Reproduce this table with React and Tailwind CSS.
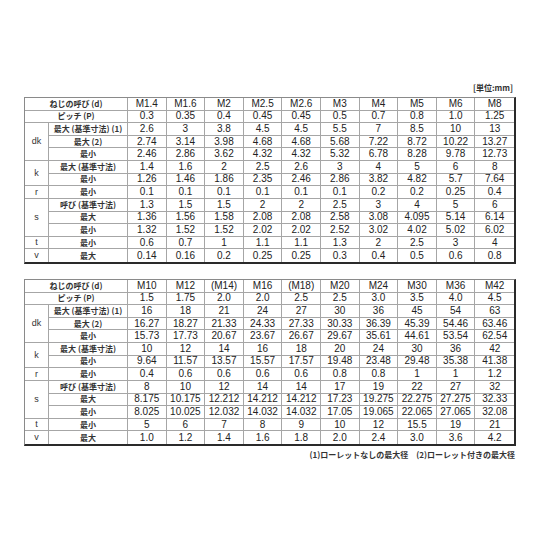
const JP = "font-['Noto_Sans_CJK_JP',sans-serif]";
const NUM = "font-['Liberation_Sans',Arial,sans-serif]";

const table1 = {
  sizes: ["M1.4", "M1.6", "M2", "M2.5", "M2.6", "M3", "M4", "M5", "M6", "M8"],
  pitch: ["0.3", "0.35", "0.4", "0.45", "0.45", "0.5", "0.7", "0.8", "1.0", "1.25"],
  groups: [
    {
      sym: "dk",
      rows: [
        ["最大 (基準寸法) (1)", ["2.6", "3", "3.8", "4.5", "4.5", "5.5", "7", "8.5", "10", "13"]],
        ["最大 (2)", ["2.74", "3.14", "3.98", "4.68", "4.68", "5.68", "7.22", "8.72", "10.22", "13.27"]],
        ["最小", ["2.46", "2.86", "3.62", "4.32", "4.32", "5.32", "6.78", "8.28", "9.78", "12.73"]],
      ],
    },
    {
      sym: "k",
      rows: [
        ["最大 (基準寸法)", ["1.4", "1.6", "2", "2.5", "2.6", "3", "4", "5", "6", "8"]],
        ["最小", ["1.26", "1.46", "1.86", "2.35", "2.46", "2.86", "3.82", "4.82", "5.7", "7.64"]],
      ],
    },
    { sym: "r", rows: [["最小", ["0.1", "0.1", "0.1", "0.1", "0.1", "0.1", "0.2", "0.2", "0.25", "0.4"]]] },
    {
      sym: "s",
      rows: [
        ["呼び (基準寸法)", ["1.3", "1.5", "1.5", "2", "2", "2.5", "3", "4", "5", "6"]],
        ["最大", ["1.36", "1.56", "1.58", "2.08", "2.08", "2.58", "3.08", "4.095", "5.14", "6.14"]],
        ["最小", ["1.32", "1.52", "1.52", "2.02", "2.02", "2.52", "3.02", "4.02", "5.02", "6.02"]],
      ],
    },
    { sym: "t", rows: [["最小", ["0.6", "0.7", "1", "1.1", "1.1", "1.3", "2", "2.5", "3", "4"]]] },
    { sym: "v", rows: [["最大", ["0.14", "0.16", "0.2", "0.25", "0.25", "0.3", "0.4", "0.5", "0.6", "0.8"]]] },
  ],
};

const table2 = {
  sizes: ["M10", "M12", "(M14)", "M16", "(M18)", "M20", "M24", "M30", "M36", "M42"],
  pitch: ["1.5", "1.75", "2.0", "2.0", "2.5", "2.5", "3.0", "3.5", "4.0", "4.5"],
  groups: [
    {
      sym: "dk",
      rows: [
        ["最大 (基準寸法) (1)", ["16", "18", "21", "24", "27", "30", "36", "45", "54", "63"]],
        ["最大 (2)", ["16.27", "18.27", "21.33", "24.33", "27.33", "30.33", "36.39", "45.39", "54.46", "63.46"]],
        ["最小", ["15.73", "17.73", "20.67", "23.67", "26.67", "29.67", "35.61", "44.61", "53.54", "62.54"]],
      ],
    },
    {
      sym: "k",
      rows: [
        ["最大 (基準寸法)", ["10", "12", "14", "16", "18", "20", "24", "30", "36", "42"]],
        ["最小", ["9.64", "11.57", "13.57", "15.57", "17.57", "19.48", "23.48", "29.48", "35.38", "41.38"]],
      ],
    },
    { sym: "r", rows: [["最小", ["0.4", "0.6", "0.6", "0.6", "0.6", "0.8", "0.8", "1", "1", "1.2"]]] },
    {
      sym: "s",
      rows: [
        ["呼び (基準寸法)", ["8", "10", "12", "14", "14", "17", "19", "22", "27", "32"]],
        ["最大", ["8.175", "10.175", "12.212", "14.212", "14.212", "17.23", "19.275", "22.275", "27.275", "32.33"]],
        ["最小", ["8.025", "10.025", "12.032", "14.032", "14.032", "17.05", "19.065", "22.065", "27.065", "32.08"]],
      ],
    },
    { sym: "t", rows: [["最小", ["5", "6", "7", "8", "9", "10", "12", "15.5", "19", "21"]]] },
    { sym: "v", rows: [["最大", ["1.0", "1.2", "1.4", "1.6", "1.8", "2.0", "2.4", "3.0", "3.6", "4.2"]]] },
  ],
};

function Cell({ children, lastCol, lastRow, className = "", style }) {
  return (
    <div
      style={style}
      className={`flex items-center justify-center border-[#a6a6a6] leading-none ${lastCol ? "" : "border-r"} ${lastRow ? "" : "border-b"} ${className}`}
    >
      {children}
    </div>
  );
}

function SpecTable({ data }) {
  const cells = [];
  const totalRows = 2 + data.groups.reduce((n, g) => n + g.rows.length, 0);

  // header + pitch rows
  const top = [
    ["ねじの呼び (d)", data.sizes],
    ["ピッチ (P)", data.pitch],
  ];
  top.forEach(([label, vals], r) => {
    cells.push(
      <Cell key={`h${r}`} className={`${JP} text-[8px] font-bold text-[#333]`} style={{ gridColumn: "1 / span 2", gridRow: r + 1 }}>
        {label}
      </Cell>
    );
    vals.forEach((v, i) => {
      cells.push(
        <Cell key={`h${r}-${i}`} lastCol={i === 9} className={`${NUM} text-[10px] text-[#222]`} style={{ gridColumn: i + 3, gridRow: r + 1 }}>
          {v}
        </Cell>
      );
    });
  });

  let row = 3;
  data.groups.forEach((g) => {
    const endRow = row + g.rows.length - 1;
    cells.push(
      <Cell
        key={`g${g.sym}`}
        lastRow={endRow === totalRows}
        className={`${NUM} text-[9px] text-[#333]`}
        style={{ gridColumn: 1, gridRow: `${row} / span ${g.rows.length}` }}
      >
        {g.sym}
      </Cell>
    );
    g.rows.forEach(([label, vals]) => {
      const last = row === totalRows;
      cells.push(
        <Cell key={`l${row}`} lastRow={last} className={`${JP} text-[8px] font-bold text-[#333]`} style={{ gridColumn: 2, gridRow: row }}>
          {label}
        </Cell>
      );
      vals.forEach((v, i) => {
        cells.push(
          <Cell key={`v${row}-${i}`} lastRow={last} lastCol={i === 9} className={`${NUM} text-[10px] text-[#222]`} style={{ gridColumn: i + 3, gridRow: row }}>
            {v}
          </Cell>
        );
      });
      row += 1;
    });
  });

  return (
    <div className="w-[492px] border-t border-l border-[#8a8a8a] border-r-2 border-b-2 border-r-[#2a2a2a] border-b-[#2a2a2a]">
      <div className="grid h-[164px] grid-cols-[24px_79px_repeat(10,minmax(0,1fr))] grid-rows-[repeat(13,minmax(0,1fr))]">
        {cells}
      </div>
    </div>
  );
}

export default function App() {
  return (
    <div className="min-h-[540px] w-[540px] bg-white">
      <div className="flex w-[492px] flex-col pl-0 ml-[24px] pt-[81px]">
        <div className={`${JP} h-[16px] pr-[3px] text-right text-[8px] font-bold leading-[14px] text-[#333]`}>[単位:mm]</div>
        <SpecTable data={table1} />
        <div className="mt-[15px]">
          <SpecTable data={table2} />
        </div>
        <div className={`${JP} mt-[3px] pr-[1px] text-right text-[8px] font-bold leading-[12px] text-[#333]`}>
          (1)ローレットなしの最大径　(2)ローレット付きの最大径
        </div>
      </div>
    </div>
  );
}
